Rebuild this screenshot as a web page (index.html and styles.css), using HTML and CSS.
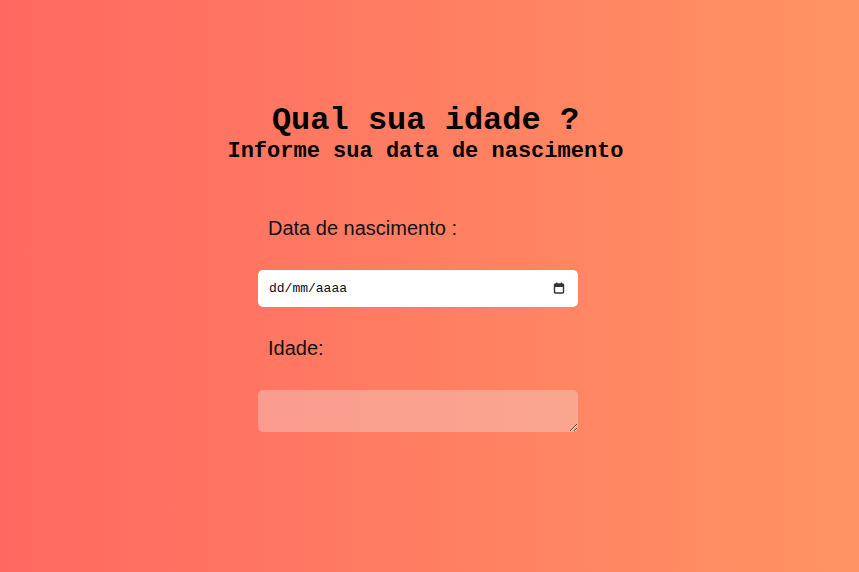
FILE: index.html
```html
<!DOCTYPE html>
<html lang="pt-BR">
<head>
<meta charset="utf-8">
<title>Qual sua idade ?</title>
<link rel="stylesheet" href="styles.css">
</head>
<body>
<div class="page">
  <header class="heading">
    <h1 class="title">Qual sua idade ?</h1>
    <h2 class="subtitle">Informe sua data de nascimento</h2>
  </header>
  <form class="form">
    <label class="label" for="nasc">Data de nascimento :</label>
    <div class="date-field">
      <input class="date-input" id="nasc" type="text" placeholder="dd/mm/aaaa">
      <svg class="cal-icon" width="12" height="12" viewBox="0 0 12 12" aria-hidden="true">
        <rect x="1.5" y="2" width="9" height="9" rx="1" fill="none" stroke="#333" stroke-width="1.4"/>
        <rect x="1.5" y="2" width="9" height="3" fill="#333"/>
        <rect x="3" y="0.5" width="1.3" height="2" fill="#333"/>
        <rect x="7.7" y="0.5" width="1.3" height="2" fill="#333"/>
      </svg>
    </div>
    <label class="label label-age" for="idade">Idade:</label>
    <textarea class="age-output" id="idade"></textarea>
  </form>
</div>
</body>
</html>
```
FILE: styles.css
```css
html, body {
  margin: 0;
  height: 100%;
}
body {
  background: linear-gradient(to right, #ff6861, #ff9463);
  font-family: "Liberation Sans", Arial, sans-serif;
  color: #111;
}
.page {
  display: flex;
  flex-direction: column;
  padding-top: 103px;
}
.heading {
  text-align: center;
  padding-right: 8px;
}
.title {
  margin: 0;
  font-family: "Liberation Mono", "Courier New", monospace;
  font-weight: bold;
  font-size: 32px;
  line-height: 36px;
  color: #000;
}
.subtitle {
  margin: 0;
  font-family: "Liberation Mono", "Courier New", monospace;
  font-weight: bold;
  font-size: 22px;
  line-height: 26px;
  color: #000;
}
.form {
  display: flex;
  flex-direction: column;
  width: 320px;
  margin-left: calc(50% - 171.5px);
  margin-top: 52px;
}
.label {
  display: block;
  padding-left: 10px;
  font-size: 20px;
  line-height: 23px;
  color: #111;
  margin-bottom: 30px;
}
.label-age {
  margin-top: 30px;
}
.date-field {
  position: relative;
  height: 37px;
}
.date-input {
  box-sizing: border-box;
  width: 100%;
  height: 37px;
  border: none;
  border-radius: 5px;
  background: #fff;
  padding: 0 0 0 11px;
  font-family: "Liberation Mono", "Courier New", monospace;
  font-size: 13px;
  color: #000;
  outline: none;
}
.date-input::placeholder {
  color: #0a0a2a;
  opacity: 1;
}
.cal-icon {
  position: absolute;
  right: 13px;
  top: 12px;
}
.age-output {
  box-sizing: border-box;
  width: 320px;
  height: 42px;
  border: none;
  border-radius: 5px;
  background: rgba(240, 230, 230, 0.35);
  outline: none;
  margin: 0;
  padding: 4px 8px;
  font-family: "Liberation Sans", Arial, sans-serif;
  font-size: 16px;
}
```
